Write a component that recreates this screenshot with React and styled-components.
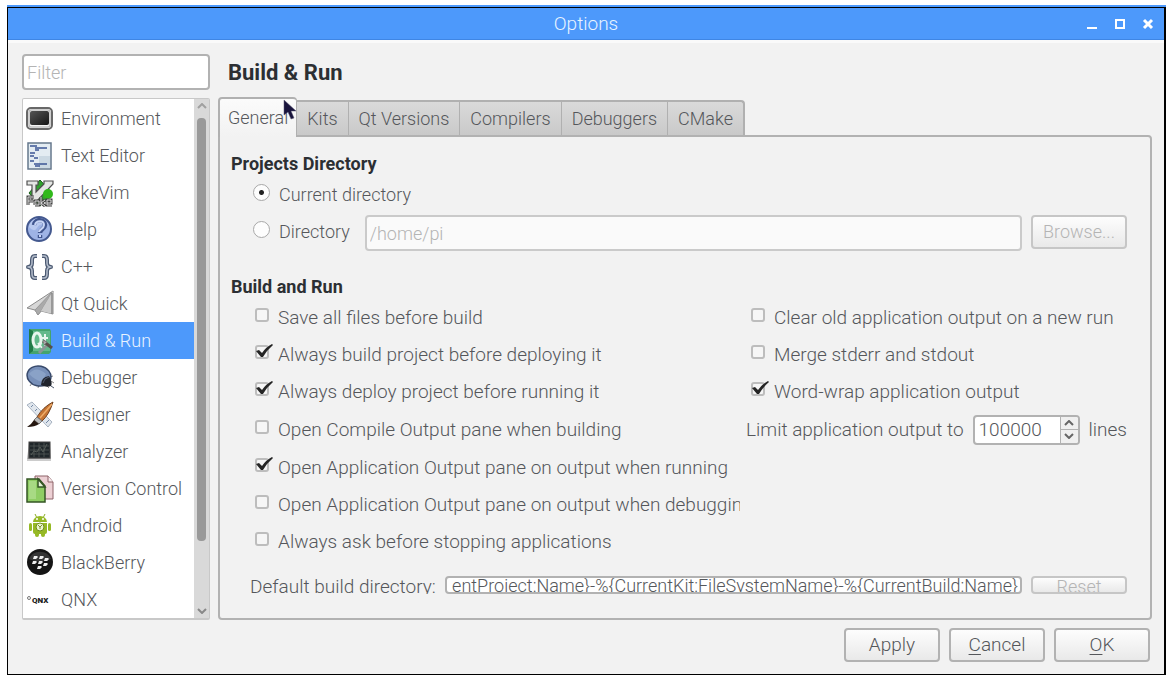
import React, { useState } from "react"
import styled, { createGlobalStyle } from "styled-components"

const colors = {
  accent: "#4d99fb",
  window: "#f2f2f2",
  text: "#55575b",
  heading: "#2c2f33",
  muted: "#b4b4b4",
  border: "#b2b2b2",
}

const GlobalStyle = createGlobalStyle`
  * {
    box-sizing: border-box;
  }
  body {
    margin: 0;
    background: #fff;
    color: ${colors.text};
    font-family: Roboto, "Liberation Sans", sans-serif;
    font-size: 19px;
    font-weight: 300;
    line-height: 24px;
  }
  button,
  input {
    font: inherit;
    color: inherit;
    margin: 0;
  }
`

const Page = styled.div`
  padding: 7px 9px 10px 7px;
`
const Window = styled.div`
  position: relative;
  background: ${colors.window};
  border: 1px solid #000;
  border-right-width: 2px;
  box-shadow: 0 -2px 0 ${colors.accent};
`
const TitleBar = styled.header`
  display: grid;
  grid-template-columns: 1fr auto 1fr;
  align-items: center;
  height: 32px;
  background: ${colors.accent};
  border-bottom: 1px solid #3f86e4;
  color: #e9f4ff;
`
const WindowTitle = styled.h1`
  grid-column: 2;
  margin: 0;
  font-size: 19px;
  font-weight: 300;
`
const WindowButtons = styled.div`
  display: flex;
  justify-content: flex-end;
  gap: 12px;
  padding-right: 8px;
`
const WindowButton = styled.button`
  display: flex;
  width: 16px;
  height: 16px;
  padding: 0;
  border: 0;
  background: none;
`
const Content = styled.div`
  display: grid;
  grid-template-columns: 188px minmax(0, 1fr);
  gap: 8px;
  padding: 11px 12px 8px 14px;
  border-top: 3px solid #fafafa;
`
const Sidebar = styled.nav`
  display: flex;
  flex-direction: column;
  gap: 8px;
  font-size: 18px;
`
const Filter = styled.input`
  width: 100%;
  height: 36px;
  padding: 0 3px;
  border: 2px solid ${colors.border};
  border-radius: 4px;
  background: #fff;
  &::placeholder {
    color: ${colors.muted};
    opacity: 1;
  }
`
const ListFrame = styled.div`
  display: flex;
  flex: 1;
  border: 1px solid #c8c8c8;
  border-bottom-width: 2px;
  border-radius: 2px;
  background: #fff;
`
const List = styled.ul`
  flex: 1;
  margin: 0;
  padding: 1px 0 0;
  list-style: none;
`
const ListItem = styled.button`
  display: flex;
  align-items: center;
  gap: 7px;
  width: 100%;
  height: 37px;
  padding: 0 3px;
  border: 0;
  background: ${({ $active }) => ($active ? colors.accent : "none")};
  color: ${({ $active }) => ($active ? "#eaf4ff" : "inherit")};
  white-space: nowrap;
  svg {
    flex: none;
  }
`
const Scrollbar = styled.div`
  display: flex;
  flex: none;
  flex-direction: column;
  align-items: center;
  width: 15px;
  padding: 4px 0;
  background: #d9d9d9;
`
const Thumb = styled.div`
  width: 9px;
  height: 423px;
  margin-top: 9px;
  margin-bottom: auto;
  border-radius: 4px;
  background: #999;
`
const Main = styled.main`
  display: flex;
  flex-direction: column;
`
const PageTitle = styled.h2`
  margin: 0;
  padding: 0 10px;
  font-size: 22px;
  font-weight: 700;
  line-height: 38px;
  color: ${colors.heading};
`
const TabBar = styled.div`
  display: flex;
  align-items: flex-end;
  margin-top: 5px;
  font-size: 18px;
`
const Tab = styled.button`
  height: ${({ $active }) => ($active ? 40 : 35)}px;
  margin-bottom: ${({ $active }) => ($active ? -2 : 0)}px;
  padding: 0 ${({ $active }) => ($active ? 8 : 10)}px;
  border: 2px solid #b0b0b0;
  border-left-width: ${({ $active }) => ($active ? 2 : 0)}px;
  border-right-width: ${({ $last }) => ($last ? 2 : 1)}px;
  border-bottom: 0;
  border-radius: ${({ $active, $last }) =>
    $active ? "4px 4px 0 0" : $last ? "0 4px 0 0" : "0"};
  background: ${({ $active }) =>
    $active
      ? `linear-gradient(#fbfbfb, ${colors.window})`
      : "linear-gradient(#dadada, #c9c9c9)"};
  z-index: ${({ $active }) => ($active ? 1 : 0)};
`
const Panel = styled.section`
  flex: 1;
  padding: 15px 23px 23px 11px;
  border: 2px solid ${colors.border};
  border-radius: 0 4px 4px 4px;
`
const GroupTitle = styled.h3`
  margin: 0;
  font-size: 18px;
  font-weight: 700;
  line-height: 24px;
  color: ${colors.heading};
`
const Choice = styled.label`
  display: flex;
  align-items: center;
  gap: 9px;
  height: 37px;
  white-space: nowrap;
`
const Radio = styled.input`
  appearance: none;
  width: 17px;
  height: 17px;
  margin-bottom: 5px;
  border: 1px solid #a8a8a8;
  border-radius: 50%;
  background: #fdfdfd;
  &:checked {
    background: radial-gradient(circle, #222 2px, #fdfdfd 3px);
  }
`
const DirectoryGroup = styled.div`
  margin: 0 0 24px 22px;
  font-size: 18px;
`
const Directory = styled.div`
  display: flex;
  gap: 9px;
  align-items: flex-start;
  input:disabled,
  button {
    margin-top: 2px;
  }
`
const PathInput = styled.input`
  flex: 1;
  min-width: 0;
  height: 36px;
  margin-left: 6px;
  padding: 0 3px;
  border: 2px solid #cacaca;
  border-radius: 4px;
  background: #fafafa;
  color: ${colors.muted};
`
const Button = styled.button`
  width: 96px;
  height: 34px;
  padding: 0;
  border: 2px solid ${colors.border};
  border-radius: 4px;
  background: linear-gradient(#fdfdfd, #e9e9e9);
  u {
    text-underline-offset: 3px;
  }
  &:disabled {
    border-color: #c6c6c6;
    color: ${colors.muted};
  }
`
const Options = styled.div`
  display: grid;
  grid-template-columns: minmax(0, 1fr) 381px;
  gap: 6px;
`
const OptionColumn = styled.div`
  overflow: hidden;
  padding-left: ${({ $indent }) => $indent}px;
  /* same height as the row with the spin box beside it */
  ${Choice}:nth-child(4) {
    height: 39px;
  }
`
const BoxHolder = styled.span`
  position: relative;
  flex: none;
  width: 14px;
  height: 14px;
  margin-bottom: 5px;
  svg {
    position: absolute;
    left: 0;
    bottom: 0;
    pointer-events: none;
  }
`
const Checkbox = styled.input`
  display: block;
  appearance: none;
  width: 14px;
  height: 14px;
  border: 2px solid #bdbdbd;
  border-radius: 3px;
  background: #f6f6f6;
`
const LimitRow = styled.div`
  display: flex;
  align-items: center;
  justify-content: space-between;
  height: 39px;
  white-space: nowrap;
`
const SpinGroup = styled.span`
  display: flex;
  align-items: center;
  gap: 9px;
`
const SpinBox = styled.span`
  display: flex;
  width: 107px;
  height: 30px;
  border: 2px solid ${colors.border};
  border-radius: 4px;
  background: #fff;
  overflow: hidden;
`
const SpinInput = styled.input`
  flex: 1;
  min-width: 0;
  padding: 0 4px;
  border: 0;
  background: none;
`
const SpinButtons = styled.span`
  display: flex;
  flex-direction: column;
  width: 18px;
  border-left: 1px solid #b2b2b2;
  background: #f0f0f0;
`
const SpinButton = styled.button`
  display: flex;
  flex: 1;
  align-items: center;
  justify-content: center;
  padding: 0;
  border: 0;
  background: none;
  & + & {
    border-top: 1px solid #b2b2b2;
  }
`
const BuildDirectory = styled.div`
  display: flex;
  gap: 9px;
  height: 18px;
  margin: 16px 0 0 19px;
  overflow: hidden;
  label {
    line-height: 21px;
    white-space: nowrap;
  }
`
const BuildInput = styled.input`
  flex: 1;
  min-width: 0;
  height: 18px;
  padding: 1px 2px 0 0;
  border: 2px solid ${colors.border};
  border-radius: 4px;
  background: #fff;
  font-size: 18px;
  text-align: right;
`
const ResetButton = styled(Button)`
  height: 18px;
  font-size: 18px;
  line-height: 18px;
  overflow: hidden;
`
const Footer = styled.footer`
  display: flex;
  justify-content: flex-end;
  gap: 9px;
  padding: 0 14px 12px;
`
const Pointer = styled.svg`
  position: absolute;
  left: 275px;
  top: 91px;
  z-index: 2;
  pointer-events: none;
`

const Icon = ({ children }) => (
  <svg width="28" height="28" viewBox="0 0 28 28" aria-hidden="true">
    {children}
  </svg>
)

const EnvironmentIcon = () => (
  <Icon>
    <defs>
      <linearGradient id="screen" x1="0" y1="0" x2="1" y2="1">
        <stop offset="0" stopColor="#555" />
        <stop offset="1" stopColor="#151515" />
      </linearGradient>
    </defs>
    <rect x="1" y="3" width="25" height="21" rx="4" fill="#f3f3f3" stroke="#686868" strokeWidth="2" />
    <rect x="3" y="5" width="21" height="17" rx="2" fill="none" stroke="#aaa" />
    <rect x="4" y="6" width="19" height="14" rx="2" fill="url(#screen)" />
  </Icon>
)

const TextEditorIcon = () => (
  <Icon>
    <rect x="2" y="1" width="23" height="26" fill="#e3ecf2" stroke="#66788c" strokeWidth="1.5" />
    <path d="M13 14h11v12H13z" fill="#cbd9e3" />
    <path
      d="M4 4h7M9 6h12M9 8h4M4 11h5M4 14h4M8 16h4M4 19h4M8 22h13M9 24h5"
      stroke="#3c5695"
      strokeWidth="1.5"
    />
  </Icon>
)

const FakeVimIcon = () => (
  <Icon>
    <path d="M14 1l12 13-12 13L3 14z" fill="#2fa32c" stroke="#185c18" />
    <path
      d="M1 2h11v4h-2v7l8-8V2h9v3L11 22H6V6H1z"
      fill="#e4e6e4"
      stroke="#505050"
      strokeWidth="1.2"
    />
    <circle cx="22" cy="15" r="5" fill="#32b91c" />
    <path
      d="M2 26v-8h6M2 22h5M9 26v-4h4v4H9M15 18v8M19 21l-4 3 4 3M21 24h4v-3h-4v5h5"
      fill="none"
      stroke="#444"
      strokeWidth="3"
    />
    <path
      d="M2 26v-8h6M2 22h5M9 26v-4h4v4H9M15 18v8M19 21l-4 3 4 3M21 24h4v-3h-4v5h5"
      fill="none"
      stroke="#ddd"
      strokeWidth="1"
    />
  </Icon>
)

const HelpIcon = () => (
  <Icon>
    <circle cx="13" cy="13" r="12" fill="#9eb3e5" stroke="#44598f" strokeWidth="2" />
    <path d="M3 11a10 10 0 0 1 19-3q-8-1-11 4t-8-1" fill="#b9c9ef" />
    <path
      d="M8 9c1-7 11-6 11 0 0 4-5 4-5 8M14 19v3"
      fill="none"
      stroke="#40558e"
      strokeWidth="4.5"
    />
    <path
      d="M9 9c1-5 9-5 9 0 0 4-5 4-5 7M14 19v2"
      fill="none"
      stroke="#c9d6f6"
      strokeWidth="2"
    />
  </Icon>
)

const CppIcon = () => (
  <Icon>
    <g fill="none" strokeLinejoin="round">
      <path
        d="M11 3H9Q6 3 6 7v3q0 4-4 4 4 0 4 4v3q0 4 3 4h2M16 3h2q3 0 3 4v3q0 4 4 4-4 0-4 4v3q0 4-3 4h-2"
        stroke="#4c5a72"
        strokeWidth="4"
      />
      <path
        d="M11 3H9Q6 3 6 7v3q0 4-4 4 4 0 4 4v3q0 4 3 4h2M16 3h2q3 0 3 4v3q0 4 4 4-4 0-4 4v3q0 4-3 4h-2"
        stroke="#b4bdcc"
        strokeWidth="1.5"
      />
    </g>
  </Icon>
)

const QtQuickIcon = () => (
  <Icon>
    <path d="M27 1L1 18l8 2 3 5 3-4 12 3z" fill="#d7d7d7" stroke="#8b8b8b" />
    <path d="M27 1L9 20l3 5 3-4z" fill="#aaa" stroke="#999" />
    <path d="M27 1L15 21l12 3z" fill="#ccc" />
    <path d="M26 3v21" stroke="#666" />
  </Icon>
)

const BuildIcon = () => (
  <Icon>
    <path d="M3 2h21l1 2v21l-2 2H3z" fill="#45a36d" />
    <path d="M3 2v25l4-3V4z" fill="#217b48" />
    <path d="M7 4h17v20H7z" fill="#63b98b" />
    <ellipse cx="11" cy="13" rx="4" ry="7" fill="none" stroke="#e8f5ee" strokeWidth="3" />
    <path d="M12 16l4 5M19 7v12M16 11h6" stroke="#e8f5ee" strokeWidth="2" />
    <path d="M13 26l9-9" stroke="#8a9695" strokeWidth="3" />
    <path d="M17 14l9 7" stroke="#56504b" strokeWidth="3" />
    <path d="M17 13l4 2-3 3" fill="#aaa" stroke="#777" />
  </Icon>
)

const DebuggerIcon = () => (
  <Icon>
    <path d="M6 19l-2 3M13 21l-1 3M24 13l3-1M25 17l3 2M21 22l2 2" stroke="#888" />
    <ellipse cx="13" cy="12" rx="12" ry="10" transform="rotate(12 13 12)" fill="#7890b9" stroke="#384a6c" strokeWidth="1.5" />
    <path d="M3 10q7-9 17 0l-4 8Q9 16 3 10z" fill="#92a9cd" opacity=".7" />
    <path d="M15 21q0-8 8-9 4 7 2 10-5 2-10-1z" fill="#20242d" />
    <path d="M17 19q1-5 6-6M25 22l3 2" stroke="#4f596d" fill="none" />
  </Icon>
)

const DesignerIcon = () => (
  <Icon>
    <path d="M1 4l5-3 20 20-4 5z" fill="#e0e6ed" stroke="#a9b4c2" />
    <path d="M5 6l2-2M9 10l2-2M13 14l2-2M17 18l2-2M20 22l3-3" stroke="#7288a5" />
    <path d="M27 1Q17 6 11 16l5 4Q23 14 27 1z" fill="#c67433" stroke="#70401d" />
    <path d="M26 3L14 17" stroke="#eead6a" strokeWidth="1.5" />
    <path d="M11 16l5 4-3 3-5-4z" fill="#bbb" stroke="#777" />
    <path d="M8 19l5 4q-4 3-12 3 4-2 7-7z" fill="#251710" />
  </Icon>
)

const AnalyzerIcon = () => (
  <Icon>
    <path d="M3 4h21l1 19H1z" fill="#999" />
    <rect x="3" y="4" width="21" height="16" fill="#20272a" stroke="#444" />
    <path d="M4 8h19M4 12h19M4 16h19M8 5v14M13 5v14M18 5v14" stroke="#59605d" strokeWidth=".7" />
    <path d="M5 17l3-4 3 1 3-5 3 5 4-8" fill="none" stroke="#565d59" />
    <path d="M1 22h24" stroke="#ccc" strokeWidth="2" />
  </Icon>
)

const VersionIcon = () => (
  <Icon>
    <path d="M9 1h13l5 6v17H9z" fill="#ecd0d4" stroke="#8d6268" />
    <path d="M22 1v6h5" fill="#f8eaec" stroke="#8d6268" />
    <path d="M1 4h12l6 7v16H1z" fill="#8fcd64" stroke="#355625" strokeWidth="1.5" />
    <path d="M3 6h7v18H3z" fill="#b9e299" opacity=".6" />
    <path d="M12 4v8h7z" fill="#e4f4d8" stroke="#355625" strokeWidth="1.5" />
  </Icon>
)

const AndroidIcon = () => (
  <Icon>
    <path d="M9 2l2 4M19 2l-2 4" stroke="#8aac23" />
    <g fill="#96b925">
      <path d="M7 10a7 6 0 0 1 14 0zM7 11h14v9q0 2-2 2H9q-2 0-2-2z" />
      <rect x="3" y="11" width="3" height="8" rx="1.5" />
      <rect x="22" y="11" width="3" height="8" rx="1.5" />
      <rect x="9" y="20" width="4" height="5" rx="2" />
      <rect x="15" y="20" width="4" height="5" rx="2" />
    </g>
    <circle cx="11" cy="7" r="1" fill="#fff" />
    <circle cx="17" cy="7" r="1" fill="#fff" />
    <circle cx="14" cy="15" r="4" fill="#eaf3cf" stroke="#708f18" />
    <path d="M12 13l2 2 2-2M14 15v2" fill="none" stroke="#7a962d" />
  </Icon>
)

const BlackBerryIcon = () => (
  <Icon>
    <circle cx="14" cy="13" r="13" fill="#151515" />
    <path d="M3 10a12 12 0 0 1 22 0q-11 5-22 0z" fill="#353535" />
    <path
      d="M8 7h3q2 1-1 3H7zM14 7h3q2 1-1 3h-3zM7 12h3q2 1-1 3H6zM13 12h3q2 1-1 3h-3zM19 9h3q2 1-1 3h-3zM18 14h3q2 1-1 3h-3zM12 17h3q2 1-1 3h-3z"
      fill="#eee"
    />
  </Icon>
)

const QnxIcon = () => (
  <Icon>
    <circle cx="3" cy="12" r="1.5" fill="none" stroke="#777" />
    <text x="6" y="17" fontSize="8" fontWeight="900" fill="#202020">
      QNX
    </text>
  </Icon>
)

const categories = [
  ["Environment", EnvironmentIcon],
  ["Text Editor", TextEditorIcon],
  ["FakeVim", FakeVimIcon],
  ["Help", HelpIcon],
  ["C++", CppIcon],
  ["Qt Quick", QtQuickIcon],
  ["Build & Run", BuildIcon],
  ["Debugger", DebuggerIcon],
  ["Designer", DesignerIcon],
  ["Analyzer", AnalyzerIcon],
  ["Version Control", VersionIcon],
  ["Android", AndroidIcon],
  ["BlackBerry", BlackBerryIcon],
  ["QNX", QnxIcon],
]

const tabs = ["General", "Kits", "Qt Versions", "Compilers", "Debuggers", "CMake"]

const buildOptions = [
  ["Save all files before build", false],
  ["Always build project before deploying it", true],
  ["Always deploy project before running it", true],
  ["Open Compile Output pane when building", false],
  ["Open Application Output pane on output when running", true],
  ["Open Application Output pane on output when debugging", false],
  ["Always ask before stopping applications", false],
]

const outputOptions = [
  ["Clear old application output on a new run", false],
  ["Merge stderr and stdout", false],
  ["Word-wrap application output", true],
]

const Chevron = ({ up, color = "#666" }) => (
  <svg width="10" height="6" viewBox="0 0 10 6" aria-hidden="true">
    <path
      d={up ? "M1 5l4-4 4 4" : "M1 1l4 4 4-4"}
      fill="none"
      stroke={color}
      strokeWidth="2"
    />
  </svg>
)

const CheckOption = ({ label, initial }) => {
  const [checked, setChecked] = useState(initial)
  return (
    <Choice>
      <BoxHolder>
        <Checkbox
          type="checkbox"
          checked={checked}
          onChange={e => setChecked(e.target.checked)}
        />
        {checked && (
          <svg width="18" height="15" viewBox="0 0 18 15" aria-hidden="true">
            <path d="M1 7l3-1 3 3q4-6 10-9l1 1Q12 6 8 13H6z" fill="#252525" />
          </svg>
        )}
      </BoxHolder>
      {label}
    </Choice>
  )
}

const App = () => {
  const [category, setCategory] = useState("Build & Run")
  const [tab, setTab] = useState("General")
  const [limit, setLimit] = useState(100000)
  const [buildDir, setBuildDir] = useState(
    "entProject:Name}-%{CurrentKit:FileSystemName}-%{CurrentBuild:Name}"
  )

  return (
    <Page>
      <GlobalStyle />
      <Window>
        <TitleBar>
          <WindowTitle>Options</WindowTitle>
          <WindowButtons>
            <WindowButton aria-label="Minimize">
              <svg width="16" height="16">
                <path d="M3 12h10" stroke="#fff" strokeWidth="2" />
              </svg>
            </WindowButton>
            <WindowButton aria-label="Maximize">
              <svg width="16" height="16">
                <path d="M4 4h8v8H4zM3 4h10" fill="none" stroke="#fff" strokeWidth="2" />
              </svg>
            </WindowButton>
            <WindowButton aria-label="Close">
              <svg width="16" height="16">
                <path d="M4 4l8 8M12 4l-8 8" stroke="#fff" strokeWidth="3" />
              </svg>
            </WindowButton>
          </WindowButtons>
        </TitleBar>

        <Content>
          <Sidebar>
            <Filter placeholder="Filter" aria-label="Filter" />
            <ListFrame>
              <List>
                {categories.map(([name, CategoryIcon]) => (
                  <li key={name}>
                    <ListItem
                      $active={name === category}
                      onClick={() => setCategory(name)}
                    >
                      <CategoryIcon />
                      {name}
                    </ListItem>
                  </li>
                ))}
              </List>
              <Scrollbar>
                <Chevron up color="#a0a0a0" />
                <Thumb />
                <Chevron color="#888" />
              </Scrollbar>
            </ListFrame>
          </Sidebar>

          <Main>
            <PageTitle>Build & Run</PageTitle>
            <TabBar role="tablist">
              {tabs.map((name, i) => (
                <Tab
                  key={name}
                  role="tab"
                  aria-selected={name === tab}
                  $active={name === tab}
                  $last={i === tabs.length - 1}
                  onClick={() => setTab(name)}
                >
                  {name}
                </Tab>
              ))}
            </TabBar>
            <Panel role="tabpanel">
              <GroupTitle>Projects Directory</GroupTitle>
              <DirectoryGroup>
                <Choice>
                  <Radio type="radio" name="directory" defaultChecked />
                  Current directory
                </Choice>
                <Directory>
                  <Choice>
                    <Radio type="radio" name="directory" />
                    Directory
                  </Choice>
                  <PathInput defaultValue="/home/pi" aria-label="Projects directory" disabled />
                  <Button disabled>Browse...</Button>
                </Directory>
              </DirectoryGroup>

              <GroupTitle>Build and Run</GroupTitle>
              <Options>
                <OptionColumn $indent={24}>
                  {buildOptions.map(([label, initial]) => (
                    <CheckOption key={label} label={label} initial={initial} />
                  ))}
                </OptionColumn>
                <div>
                  <OptionColumn $indent={5}>
                    {outputOptions.map(([label, initial]) => (
                      <CheckOption key={label} label={label} initial={initial} />
                    ))}
                  </OptionColumn>
                  <LimitRow>
                    <label htmlFor="limit">Limit application output to</label>
                    <SpinGroup>
                      <SpinBox>
                        <SpinInput
                          id="limit"
                          value={limit}
                          onChange={e => setLimit(Number(e.target.value) || 0)}
                        />
                        <SpinButtons>
                          <SpinButton aria-label="More lines" onClick={() => setLimit(limit + 1)}>
                            <Chevron up />
                          </SpinButton>
                          <SpinButton aria-label="Fewer lines" onClick={() => setLimit(limit - 1)}>
                            <Chevron />
                          </SpinButton>
                        </SpinButtons>
                      </SpinBox>
                      lines
                    </SpinGroup>
                  </LimitRow>
                </div>
              </Options>

              <BuildDirectory>
                <label htmlFor="build-dir">Default build directory:</label>
                <BuildInput
                  id="build-dir"
                  value={buildDir}
                  onChange={e => setBuildDir(e.target.value)}
                />
                <ResetButton disabled>Reset</ResetButton>
              </BuildDirectory>
            </Panel>
          </Main>
        </Content>

        <Footer>
          <Button>Apply</Button>
          <Button>
            <u>C</u>ancel
          </Button>
          <Button>
            <u>O</u>K
          </Button>
        </Footer>

        <Pointer width="14" height="22" viewBox="0 0 14 22" aria-hidden="true">
          <path
            d="M1 1v15l4-3 3 7 3-1-3-7h5z"
            fill="#19143c"
            stroke="#5a5670"
            strokeWidth=".5"
          />
        </Pointer>
      </Window>
    </Page>
  )
}

export default App
